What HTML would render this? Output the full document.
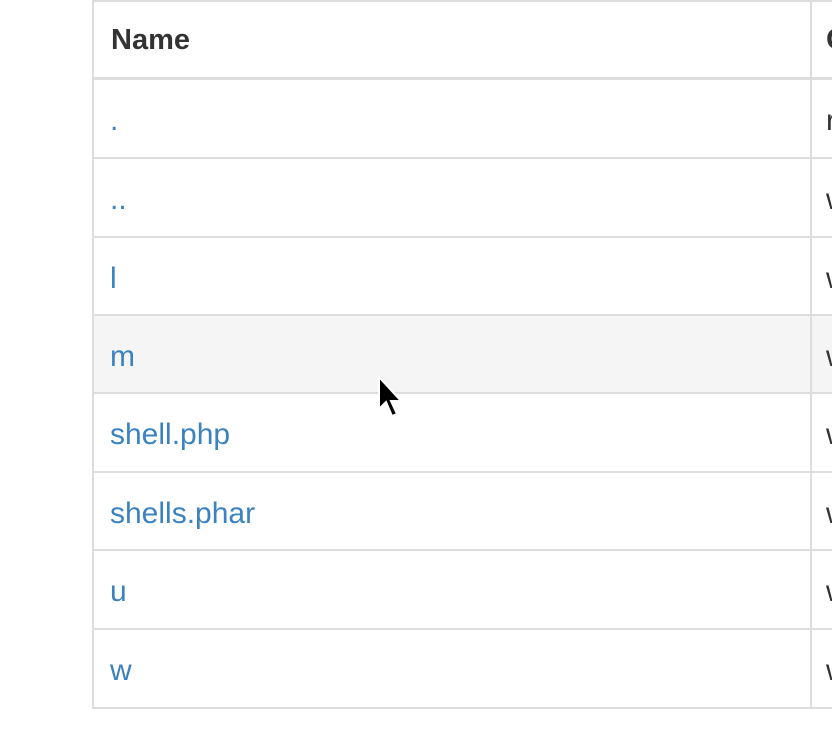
<!DOCTYPE html>
<html><head><style>
html,body{margin:0;padding:0;background:#fff;width:832px;height:756px;overflow:hidden;font-family:"Liberation Sans",sans-serif;position:relative;}
.r{position:absolute;left:92px;width:760px;border-left:2px solid #ddd;box-sizing:border-box;}
.c{position:absolute;left:16px;top:4px;bottom:0;display:flex;align-items:center;font-size:30px;color:#3a82c0;white-space:nowrap;}
.o{position:absolute;left:732px;top:4px;bottom:0;display:flex;align-items:center;font-size:30px;color:#333;white-space:nowrap;}
.v{position:absolute;left:716px;top:0;bottom:0;width:2px;background:#ddd;}
.hl{position:absolute;left:92px;width:740px;height:2px;background:#ddd;}
</style></head><body>
<div class="hl" style="top:0"></div>
<div class="r" style="top:2px;height:76px"><div class="c" style="color:#333;font-weight:bold;left:17px;font-size:29px;top:0">Name</div><div class="v"></div><div class="o" style="font-weight:bold;top:0">Owner</div></div>
<div class="hl" style="top:77px;height:3px"></div>
<div class="r" style="top:80px;height:78px"><div class="c">.</div><div class="v"></div><div class="o">root</div></div>
<div class="hl" style="top:157px"></div>
<div class="r" style="top:159px;height:78px"><div class="c">..</div><div class="v"></div><div class="o">www</div></div>
<div class="hl" style="top:236px"></div>
<div class="r" style="top:238px;height:77px"><div class="c">l</div><div class="v"></div><div class="o">www</div></div>
<div class="hl" style="top:314px"></div>
<div class="r" style="top:316px;height:77px;background:#f5f5f5"><div class="c">m</div><div class="v"></div><div class="o">www</div></div>
<div class="hl" style="top:392px"></div>
<div class="r" style="top:394px;height:78px"><div class="c">shell.php</div><div class="v"></div><div class="o">www</div></div>
<div class="hl" style="top:471px"></div>
<div class="r" style="top:473px;height:77px"><div class="c">shells.phar</div><div class="v"></div><div class="o">www</div></div>
<div class="hl" style="top:549px"></div>
<div class="r" style="top:551px;height:78px"><div class="c">u</div><div class="v"></div><div class="o">www</div></div>
<div class="hl" style="top:628px"></div>
<div class="r" style="top:630px;height:77px"><div class="c">w</div><div class="v"></div><div class="o">www</div></div>
<div class="hl" style="top:707px"></div>
<svg style="position:absolute;left:376px;top:375px" width="30" height="44" viewBox="0 0 30 44">
<path d="M3 2 L3 34 L10 27 L16 41 L21 39 L15 26 L25 26 Z" fill="#000" stroke="#fff" stroke-width="2"/>
</svg>
</body></html>
